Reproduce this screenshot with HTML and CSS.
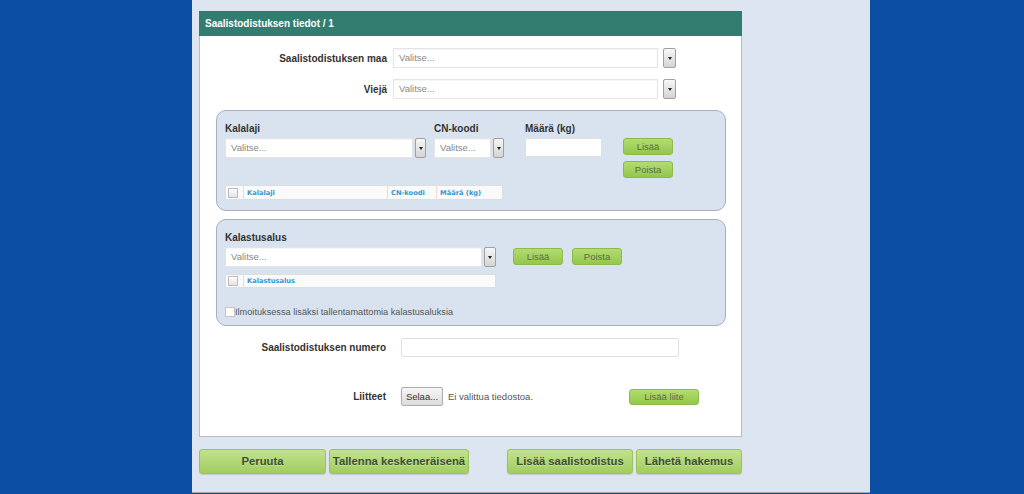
FILE: index.html
```html
<!DOCTYPE html>
<html lang="fi">
<head>
<meta charset="utf-8">
<title>Saalistodistuksen tiedot</title>
<link rel="stylesheet" href="styles.css">
</head>
<body>
<div class="panel">
  <div class="card">
    <div class="card-head">Saalistodistuksen tiedot / 1</div>
    <div class="card-body">
      <div class="row">
        <div class="lbl">Saalistodistuksen maa</div>
        <div class="select sel-main"><div class="sel-field">Valitse...</div><div class="sel-btn wide"><span class="tri"></span></div></div>
      </div>
      <div class="row row-gap">
        <div class="lbl">Viejä</div>
        <div class="select sel-main"><div class="sel-field">Valitse...</div><div class="sel-btn wide"><span class="tri"></span></div></div>
      </div>

      <div class="box fish">
        <div class="fish-row">
          <div class="fcol c1">
            <div class="flbl">Kalalaji</div>
            <div class="select"><div class="sel-field">Valitse...</div><div class="sel-btn"><span class="tri"></span></div></div>
          </div>
          <div class="fcol c2">
            <div class="flbl">CN-koodi</div>
            <div class="select"><div class="sel-field">Valitse...</div><div class="sel-btn"><span class="tri"></span></div></div>
          </div>
          <div class="fcol c3">
            <div class="flbl">Määrä (kg)</div>
            <div class="text-in kg"></div>
          </div>
          <div class="fcol c4">
            <div class="sbtn">Lisää</div>
            <div class="sbtn">Poista</div>
          </div>
        </div>
        <div class="tbl fish-tbl">
          <div class="cell chk-cell"><span class="chk"></span></div>
          <div class="cell t-kala">Kalalaji</div>
          <div class="cell t-cn">CN-koodi</div>
          <div class="cell t-maara">Määrä (kg)</div>
        </div>
      </div>

      <div class="box vessel">
        <div class="flbl">Kalastusalus</div>
        <div class="vrow">
          <div class="select sel-vessel"><div class="sel-field">Valitse...</div><div class="sel-btn"><span class="tri"></span></div></div>
          <div class="sbtn v1">Lisää</div>
          <div class="sbtn v2">Poista</div>
        </div>
        <div class="tbl vessel-tbl">
          <div class="cell chk-cell"><span class="chk"></span></div>
          <div class="cell t-alus">Kalastusalus</div>
        </div>
        <div class="check-row"><span class="chk plain"></span><span class="check-txt">Ilmoituksessa lisäksi tallentamattomia kalastusaluksia</span></div>
      </div>

      <div class="row row-num">
        <div class="lbl lbl2">Saalistodistuksen numero</div>
        <div class="text-in num"></div>
      </div>
      <div class="row row-att">
        <div class="lbl lbl2">Liitteet</div>
        <div class="browse">Selaa...</div>
        <div class="nofile">Ei valittua tiedostoa.</div>
        <div class="sbtn att">Lisää liite</div>
      </div>
    </div>
  </div>
  <div class="actions">
    <div class="bbtn b1">Peruuta</div>
    <div class="bbtn b2">Tallenna keskeneräisenä</div>
    <div class="bbtn b3">Lisää saalistodistus</div>
    <div class="bbtn b4">Lähetä hakemus</div>
  </div>
</div>
</body>
</html>
```
FILE: styles.css
```css
* { box-sizing: border-box; }
body {
  margin: 0;
  background: #0b4ea4;
  font-family: "Liberation Sans", Arial, sans-serif;
  color: #333;
}
.panel {
  margin-left: 192px;
  width: 678px;
  height: 493px;
  background: #dce5f0;
  border-bottom: 1px solid #a3acb6;
  padding: 11px 0 0 7px;
}
.card {
  width: 543px;
  background: #fff;
  border: 1px solid #b3bcc7;
  border-top: none;
}
.card-head {
  height: 25px;
  margin: 0 -1px;
  background: #327d6f;
  color: #fff;
  font-weight: bold;
  font-size: 10px;
  line-height: 25px;
  padding-left: 6px;
}
.card-body { padding: 12px 0 30px 0; }
.row { display: flex; align-items: center; }
.row-gap { margin-top: 11px; }
.lbl {
  width: 187px;
  margin-right: 6px;
  text-align: right;
  font-weight: bold;
  font-size: 10px;
  color: #333;
}
.lbl2 { width: 186px; margin-right: 15px; }

/* select */
.select { display: flex; height: 20px; }
.sel-field {
  flex: 1;
  background: #fff;
  border: 1px solid #e4e4e4;
  box-shadow: inset 0 1px 1px rgba(0,0,0,0.04);
  font-size: 9.5px;
  color: #888;
  line-height: 18px;
  padding-left: 5px;
}
.sel-btn {
  width: 11px;
  margin-left: 2px;
  border: 1px solid #a0a0a0;
  border-radius: 2px;
  background: linear-gradient(#f7f7f7, #d4d4d4);
  display: flex;
  align-items: center;
  justify-content: center;
}
.sel-btn.wide { width: 13px; margin-left: 5px; }
.tri {
  width: 0; height: 0;
  border-left: 2.5px solid transparent;
  border-right: 2.5px solid transparent;
  border-top: 3px solid #222;
}
.sel-main { width: 283px; }

/* boxes */
.box {
  margin-left: 16px;
  width: 510px;
  background: #d9e3ef;
  border: 1px solid #a8b0ba;
  border-radius: 10px;
}
.fish { margin-top: 11px; padding: 11px 0 10px 8px; }
.vessel { margin-top: 8px; padding: 11px 0 8px 8px; }
.flbl {
  font-size: 10px;
  font-weight: bold;
  line-height: 14px;
  margin-bottom: 2px;
  color: #333;
}
.fish-row { display: flex; }
.fcol { display: flex; flex-direction: column; }
.c1 { width: 201px; }
.c2 { width: 70px; margin-left: 8px; }
.c3 { width: 77px; margin-left: 21px; }
.c4 { width: 50px; margin-left: 21px; padding-top: 16px; gap: 6px; }
.text-in {
  background: #fff;
  border: 1px solid #e0e0e0;
  border-radius: 2px;
}
.kg { height: 19px; }
.sbtn {
  height: 17px;
  width: 50px;
  border: 1px solid #8dba4c;
  border-radius: 3px;
  background: linear-gradient(#b2dc70, #93c84a);
  color: #5d6b52;
  font-size: 9.5px;
  line-height: 15px;
  text-align: center;
}

/* tables */
.tbl {
  display: flex;
  background: #fafafa;
  border: 1px solid #dedede;
}
.fish-tbl { margin-top: 7px; width: 278px; height: 15px; }
.vessel-tbl { margin-top: 7px; width: 271px; height: 14px; }
.cell {
  font-family: "DejaVu Sans", Verdana, sans-serif;
  font-weight: bold;
  font-size: 6.7px;
  color: #3596cf;
  display: flex;
  align-items: center;
  padding-left: 3px;
  border-left: 1px solid #f1dccf;
}
.chk-cell { width: 17px; border-left: none; padding-left: 2px; }
.t-kala { width: 144px; }
.t-cn { width: 49px; }
.t-maara { flex: 1; }
.t-alus { flex: 1; }
.chk {
  width: 10px; height: 10px;
  border: 1px solid #bcbcbc;
  background: linear-gradient(#fdfdfd, #e4e4e4);
}
.chk.plain { background: #fff; border-color: #c4c4c4; }

.vrow { display: flex; align-items: flex-start; }
.sel-vessel { width: 271px; }
.sel-vessel .sel-btn { width: 12px; }
.v1 { margin-left: 17px; margin-top: 1px; }
.v2 { margin-left: 9px; margin-top: 1px; }
.check-row {
  margin-top: 19px;
  height: 10px;
  display: flex;
  align-items: center;
}
.check-txt { font-size: 9.2px; color: #555; }

.row-num { margin-top: 12px; }
.num { width: 278px; height: 19px; }
.row-att { margin-top: 30px; }
.browse {
  width: 42px;
  height: 19px;
  border: 1px solid #acacac;
  border-radius: 2px;
  background: linear-gradient(#f6f6f6, #dcdcdc);
  font-size: 9.5px;
  color: #333;
  line-height: 17px;
  text-align: center;
}
.nofile {
  width: 186px;
  padding-left: 5px;
  font-size: 9.5px;
  color: #555;
}
.att { width: 70px; height: 16px; line-height: 14px; }

/* actions */
.actions { display: flex; margin-top: 12px; }
.bbtn {
  height: 25px;
  border: 1px solid #9cc360;
  border-radius: 3px;
  background: linear-gradient(#c2e28f, #a2cd5f);
  box-shadow: 0 1px 1px rgba(0,0,0,0.12);
  color: #3d4f31;
  font-weight: bold;
  font-size: 11.3px;
  line-height: 23px;
  text-align: center;
  text-shadow: 0 1px 0 rgba(255,255,255,0.3);
}
.b1 { width: 127px; }
.b2 { width: 140px; margin-left: 3px; }
.b3 { width: 126px; margin-left: 38px; }
.b4 { width: 106px; margin-left: 3px; }
```
